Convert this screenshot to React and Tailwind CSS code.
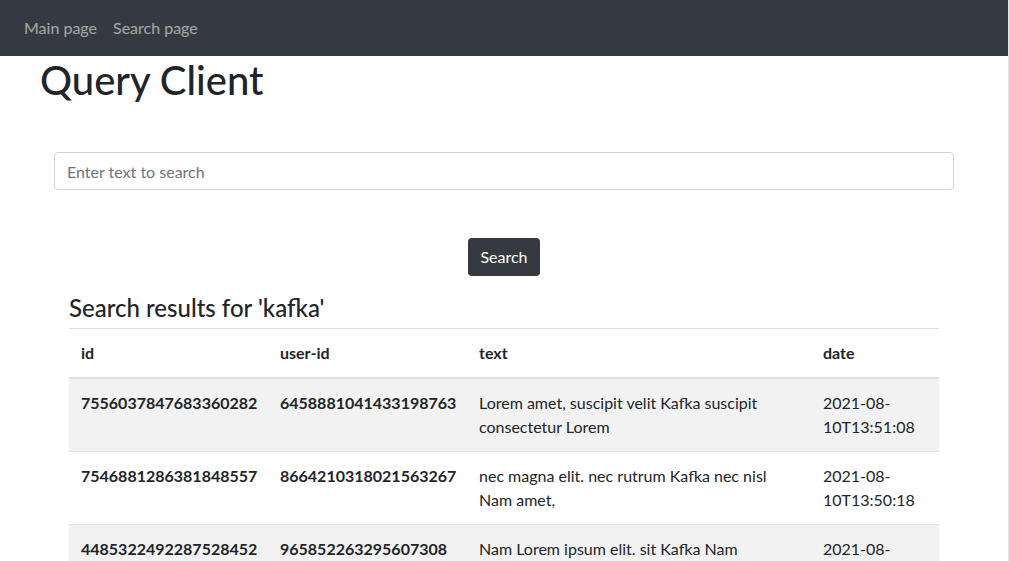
import React from "react";

const rows = [
  {
    id: "7556037847683360282",
    userId: "6458881041433198763",
    text: "Lorem amet, suscipit velit Kafka suscipit consectetur Lorem",
    date: "2021-08-10T13:51:08",
  },
  {
    id: "7546881286381848557",
    userId: "8664210318021563267",
    text: "nec magna elit. nec rutrum Kafka nec nisl Nam amet,",
    date: "2021-08-10T13:50:18",
  },
  {
    id: "4485322492287528452",
    userId: "965852263295607308",
    text: "Nam Lorem ipsum elit. sit Kafka Nam consectetur amet",
    date: "2021-08-10T13:49:27",
  },
];

export default function App() {
  return (
    <div className="h-[561px] overflow-hidden bg-white text-[#212529] font-['Lato','Noto_Sans',sans-serif] text-base leading-6 border-r border-[#e5e5e5]">
      {/* NAVBAR */}
      <nav className="h-14 bg-[#343a40] flex items-center px-6 gap-4">
        <a className="text-white/55">Main page</a>
        <a className="text-white/55">Search page</a>
      </nav>

      <div className="px-10">
        <h1 className="text-[40px] leading-[48px] font-medium">Query Client</h1>

        {/* SEARCH */}
        <div className="px-[14px] mt-12">
          <input
            type="text"
            placeholder="Enter text to search"
            className="w-full h-[38px] px-3 rounded border border-[#ced4da] placeholder:text-[#6c757d] outline-none"
          />
          <div className="flex justify-center mt-12">
            <button className="h-[38px] px-3 rounded bg-[#343a40] text-white">Search</button>
          </div>
        </div>

        {/* RESULTS */}
        <div className="px-[29px] mt-[17px]">
          <h4 className="text-2xl leading-[29px] font-medium mb-[6px]">Search results for 'kafka'</h4>
          <table className="w-full table-fixed border-collapse text-left">
            <thead>
              <tr className="border-t border-[#dee2e6] border-b-2 border-b-[#dee2e6]">
                <th className="w-[199px] p-3 font-bold">id</th>
                <th className="w-[199px] p-3 font-bold">user-id</th>
                <th className="w-[344px] p-3 font-bold">text</th>
                <th className="w-[128px] p-3 font-bold">date</th>
              </tr>
            </thead>
            <tbody>
              {rows.map((r, i) => (
                <tr key={r.id} className={`border-b border-[#dee2e6] align-top ${i % 2 === 0 ? "bg-[#f2f2f2]" : "bg-white"}`}>
                  <td className="p-3 font-bold">{r.id}</td>
                  <td className="p-3 font-bold">{r.userId}</td>
                  <td className="p-3">{r.text}</td>
                  <td className="p-3">{r.date}</td>
                </tr>
              ))}
            </tbody>
          </table>
        </div>
      </div>
    </div>
  );
}
